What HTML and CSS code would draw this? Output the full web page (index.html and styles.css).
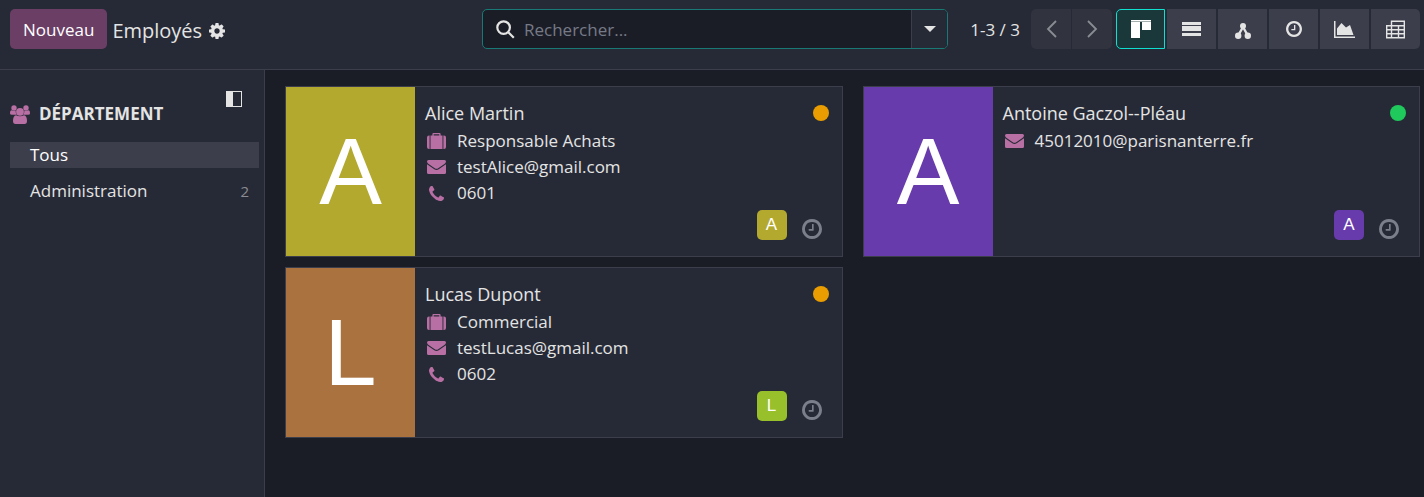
FILE: index.html
```
<!DOCTYPE html>
<html lang="fr">
<head>
<meta charset="utf-8">
<title>Employés</title>
<link rel="stylesheet" href="styles.css">
</head>
<body>
<svg class="sprite" aria-hidden="true">
  <symbol id="cog" viewBox="128 128 1536 1536"><path d="M1152 896q0-106-75-181t-181-75-181 75-75 181 75 181 181 75 181-75 75-181zm512-109v222q0 12-8 23t-20 13l-185 28q-19 54-39 91 35 50 107 138 10 12 10 25t-9 23q-27 37-99 108t-94 71q-12 0-26-9l-138-108q-44 23-91 38-16 136-29 186-7 28-36 28h-222q-14 0-24.500-8.500t-11.500-21.500l-28-184q-49-16-90-37l-141 107q-10 9-25 9-14 0-25-11-126-114-165-168-7-10-7-23 0-12 8-23 15-21 51-66.500t54-70.500q-27-50-41-99l-183-27q-13-2-21-12.500t-8-23.500v-222q0-12 8-23t19-13l186-28q14-46 39-92-40-57-107-138-10-12-10-24 0-10 9-23 26-36 98.500-107.500t94.500-71.500q13 0 26 10l138 107q44-23 91-38 16-136 29-186 7-28 36-28h222q14 0 24.500 8.500t11.500 21.500l28 184q49 16 90 37l142-107q9-9 24-9 13 0 25 10 129 119 165 170 7 8 7 22 0 12-8 23-15 21-51 66.500t-54 70.500q26 50 41 98l183 28q13 2 21 12.500t8 23.500z"/></symbol>
  <symbol id="clock" viewBox="128 128 1536 1536"><path d="M1024 544v448q0 14-9 23t-23 9h-320q-14 0-23-9t-9-23v-64q0-14 9-23t23-9h224v-352q0-14 9-23t23-9h64q14 0 23 9t9 23zm416 352q0-148-73-273t-198-198-273-73-273 73-198 198-73 273 73 273 198 198 273 73 273-73 198-198 73-273zm224 0q0 209-103 385.500t-279.500 279.500-385.500 103-385.500-103-279.500-279.500-103-385.500 103-385.500 279.500-279.500 385.500-103 385.500 103 279.500 279.500 103 385.500z"/></symbol>
  <symbol id="phone" viewBox="192 128 1408 1408"><path d="M1600 1240q0 27-10 70.500t-21 68.500q-21 50-122 106-94 51-186 51-27 0-52.500-3.500t-57.500-12.500-47.500-14.500-55.500-20.500-49-18q-98-35-175-83-128-79-264.500-215.500t-215.500-264.500q-48-77-83-175-3-9-18-49t-20.500-55.500-14.500-47.500-12.500-57.500-3.500-52.500q0-92 51-186 56-101 106-122 25-11 68.500-21t70.500-10q14 0 21 3 18 6 53 76 11 19 30 54t35 63.500 31 53.500q3 4 17.500 25t21.500 35.500 7 28.500q0 20-28.500 50t-62 55-62 53-28.500 46q0 9 5 22.500t8.500 20.500 14 24 11.500 19q76 137 174 235t235 174q2 1 19 11.500t24 14 20.500 8.500 22.500 5q18 0 46-28.500t53-62 55-62 50-28.500q14 0 28.500 7t35.500 21.500 25 17.500q25 15 53.500 31t63.500 35 54 30q70 35 76 53 3 7 3 21z"/></symbol>
  <symbol id="mail" viewBox="0 0 19 14"><path d="M1.500 0h16Q19 0 19 1.500 18.800 3 17.400 4L11.200 8.300Q9.500 9.400 7.800 8.300L1.600 4Q.2 3 0 1.500 0 0 1.500 0zM0 4.200 7.300 9.300Q9.500 10.800 11.700 9.300L19 4.200V12.500Q19 14 17.500 14h-16Q0 14 0 12.500z"/></symbol>
  <symbol id="case" viewBox="0 0 19 16"><path d="M2.600 2.500V16H2Q0 16 0 14V4.500Q0 2.500 2 2.500zM16.400 2.500H17q2 0 2 2V14q0 2-2 2h-.6zM3.500 2.500H5.400V1Q5.400 0 6.400 0h6.200q1 0 1 1v1.500h1.900V16H3.500zM6.700 1.300v1.200h5.600V1.300z"/></symbol>
  <symbol id="group" viewBox="0 0 20 19"><circle cx="4" cy="3" r="2.700"/><circle cx="16" cy="3" r="2.700"/><path d="M0 8.500Q0 5 1.800 5.200 4 6.600 5.600 5.600 5.500 8 6.800 9.700H2Q0 9.700 0 8.500zM20 8.500Q20 5 18.200 5.200 16 6.600 14.400 5.600 14.500 8 13.200 9.700H18q2 0 2-1.200z"/><circle cx="10" cy="6.800" r="3.900"/><path d="M6 10.200q4 2.300 8 0 3 .5 3 5.800 0 3-2.500 3h-9Q3 19 3 16q0-5.300 3-5.800z"/></symbol>
  <symbol id="panel" viewBox="0 0 16 16"><path d="M0 0h16v16H0zM7 1v14h8V1z" fill-rule="evenodd"/></symbol>
  <symbol id="search" viewBox="0 0 19 19"><circle cx="7.600" cy="7.600" r="6.300" fill="none" stroke="currentColor" stroke-width="2.200"/><path d="m12 12 5.800 5.800" stroke="currentColor" stroke-width="2.200"/></symbol>
  <symbol id="caret" viewBox="0 0 12 6"><path d="M0 0h12L6 6z"/></symbol>
  <symbol id="prev" viewBox="0 0 11 18"><path d="M10 1 2 9l8 8" fill="none" stroke="currentColor" stroke-width="1.800"/></symbol>
  <symbol id="next" viewBox="0 0 11 18"><path d="m1 1 8 8-8 8" fill="none" stroke="currentColor" stroke-width="1.800"/></symbol>
  <symbol id="kanban" viewBox="0 0 20 18"><path d="M0 0h20v1H0zM0 2h9v16H0zM11 2h9v8h-9z"/><path d="M0 1h20v1H0z" opacity=".6"/></symbol>
  <symbol id="list" viewBox="0 0 19 14"><path d="M0 0h19v3H0zM0 4h19v5H0zM0 11h19v3H0z"/></symbol>
  <symbol id="tree" viewBox="0 0 16 16"><circle cx="8" cy="3" r="3"/><circle cx="3.200" cy="12.800" r="3.200"/><circle cx="12.800" cy="12.800" r="3.200"/><path d="M8 4 3.200 12.500M8 4l4.800 8.500" stroke="currentColor" stroke-width="2.400"/></symbol>
  <symbol id="chart" viewBox="0 0 21 17"><path d="M0 0h1.500v15.500H21V17H0zM3 14V7.500L7.500 2l4.500 4.500L16 4l3.500 10z"/></symbol>
  <symbol id="pivot" viewBox="0 0 19 18"><path d="M5.500 5V.7h12.800v16.600H.7V5.300h17.600M.7 9.300h17.600M.7 13.300h17.600M5.500 5v12M12.500 5v12" fill="none" stroke="currentColor" stroke-width="1.400"/></symbol>
</svg>

<header class="control-panel">
  <div class="breadcrumb">
    <button class="btn-new" type="button">Nouveau</button>
    <h1 class="title">Employés</h1>
    <button class="icon-btn" type="button" aria-label="Actions"><svg class="ico-16"><use href="#cog"/></svg></button>
  </div>
  <div class="search">
    <label class="search-label" for="q" aria-label="Rechercher"><svg class="ico-19"><use href="#search"/></svg></label>
    <input class="search-input" id="q" type="text" placeholder="Rechercher...">
    <button class="search-toggle" type="button" aria-label="Filtres"><svg class="ico-caret"><use href="#caret"/></svg></button>
  </div>
  <div class="tools">
    <span class="pager">1-3 / 3</span>
    <div class="pager-nav">
      <button class="pager-btn" type="button" disabled aria-label="Précédent"><svg class="ico-arrow"><use href="#prev"/></svg></button>
      <button class="pager-btn" type="button" disabled aria-label="Suivant"><svg class="ico-arrow"><use href="#next"/></svg></button>
    </div>
    <nav class="views">
      <button class="view-btn active" type="button" aria-label="Kanban"><svg class="ico-view"><use href="#kanban"/></svg></button>
      <button class="view-btn" type="button" aria-label="Liste"><svg class="ico-list"><use href="#list"/></svg></button>
      <button class="view-btn" type="button" aria-label="Hiérarchie"><svg class="ico-tree"><use href="#tree"/></svg></button>
      <button class="view-btn" type="button" aria-label="Activité"><svg class="ico-16"><use href="#clock"/></svg></button>
      <button class="view-btn" type="button" aria-label="Graphique"><svg class="ico-chart"><use href="#chart"/></svg></button>
      <button class="view-btn" type="button" aria-label="Tableau croisé"><svg class="ico-19"><use href="#pivot"/></svg></button>
    </nav>
  </div>
</header>

<div class="content">
  <aside class="sidebar">
    <button class="icon-btn collapse" type="button" aria-label="Réduire"><svg class="ico-16"><use href="#panel"/></svg></button>
    <h2 class="section"><svg class="ico-group"><use href="#group"/></svg>Département</h2>
    <ul class="filters">
      <li><button class="filter selected" type="button">Tous</button></li>
      <li><button class="filter" type="button">Administration<span class="count">2</span></button></li>
    </ul>
  </aside>

  <main class="cards">
    <article class="card">
      <div class="photo olive">A</div>
      <div class="info">
        <div class="head"><h3 class="name">Alice Martin</h3><span class="status away"></span></div>
        <ul class="details">
          <li class="detail"><span class="mark"><svg class="ico-case"><use href="#case"/></svg></span>Responsable Achats</li>
          <li class="detail"><span class="mark"><svg class="ico-mail"><use href="#mail"/></svg></span>testAlice@gmail.com</li>
          <li class="detail"><span class="mark"><svg class="ico-phone"><use href="#phone"/></svg></span>0601</li>
        </ul>
        <div class="foot"><span class="avatar olive">A</span><button class="icon-btn activity" type="button" aria-label="Activités"><svg class="ico-20"><use href="#clock"/></svg></button></div>
      </div>
    </article>
    <article class="card">
      <div class="photo violet">A</div>
      <div class="info">
        <div class="head"><h3 class="name">Antoine Gaczol--Pléau</h3><span class="status online"></span></div>
        <ul class="details">
          <li class="detail"><span class="mark"><svg class="ico-mail"><use href="#mail"/></svg></span>45012010@parisnanterre.fr</li>
        </ul>
        <div class="foot"><span class="avatar violet">A</span><button class="icon-btn activity" type="button" aria-label="Activités"><svg class="ico-20"><use href="#clock"/></svg></button></div>
      </div>
    </article>
    <article class="card">
      <div class="photo brown">L</div>
      <div class="info">
        <div class="head"><h3 class="name">Lucas Dupont</h3><span class="status away"></span></div>
        <ul class="details">
          <li class="detail"><span class="mark"><svg class="ico-case"><use href="#case"/></svg></span>Commercial</li>
          <li class="detail"><span class="mark"><svg class="ico-mail"><use href="#mail"/></svg></span>testLucas@gmail.com</li>
          <li class="detail"><span class="mark"><svg class="ico-phone"><use href="#phone"/></svg></span>0602</li>
        </ul>
        <div class="foot"><span class="avatar lime">L</span><button class="icon-btn activity" type="button" aria-label="Activités"><svg class="ico-20"><use href="#clock"/></svg></button></div>
      </div>
    </article>
  </main>
</div>
</body>
</html>
```
FILE: styles.css
```
* { box-sizing: border-box; }
body {
  margin: 0;
  min-height: 100vh;
  display: flex;
  flex-direction: column;
  background: #1b1d26;
  color: #e4e4e4;
  font: 17px/26px "Segoe UI", "Open Sans", "Noto Sans", sans-serif;
}
h1, h2, h3, ul { margin: 0; padding: 0; font-weight: 400; list-style: none; }
button, input { font: inherit; color: inherit; border: 0; padding: 0; margin: 0; background: none; }
svg { display: block; fill: currentColor; }
.sprite { position: absolute; width: 0; height: 0; }

.ico-16 { width: 16px; height: 16px; }
.ico-tree { width: 16px; height: 16px; margin-top: 4px; }
.ico-19 { width: 19px; height: 19px; }
.ico-20 { width: 20px; height: 20px; }
.ico-caret { width: 12px; height: 6px; }
.ico-arrow { width: 11px; height: 18px; }
.ico-view { width: 20px; height: 18px; }
.ico-list { width: 19px; height: 14px; }
.ico-chart { width: 21px; height: 17px; }
.ico-group { width: 20px; height: 19px; color: #b86fa4; }
.ico-case { width: 19px; height: 16px; }
.ico-mail { width: 19px; height: 14px; }
.ico-phone { width: 15px; height: 15px; }

.control-panel {
  display: grid;
  grid-template-columns: 1fr minmax(0, 466px) 1fr;
  align-items: center;
  padding: 9px 4px 20px 10px;
  background: #262a36;
  border-bottom: 1px solid #3c3e4b;
}
.breadcrumb { display: flex; align-items: center; gap: 5px; }
.btn-new { height: 40px; padding: 2px 13px 0; border-radius: 5px; background: #6b3e66; color: #fff; }
.title { padding-top: 3px; font-size: 20px; }
.icon-btn { display: flex; cursor: pointer; }
.breadcrumb .icon-btn { padding: 3px 0 0 2px; }

.search { display: flex; height: 40px; border: 1px solid #197a75; border-radius: 5px; background: #1b1d26; overflow: hidden; }
.search-label { display: flex; align-items: center; padding: 0 9px 0 13px; }
.search-input { flex: 1; min-width: 0; padding-top: 2px; outline: 0; }
.search-input::placeholder { color: #767a87; opacity: 1; }
.search-toggle { display: flex; align-items: center; justify-content: center; width: 36px; background: #262a36; border-left: 1px solid #3c3e4b; }

.tools { display: flex; align-items: center; justify-content: flex-end; }
.pager { margin-right: 11px; padding-top: 2px; white-space: nowrap; }
.pager-nav { display: flex; gap: 1px; margin-right: 4px; border-radius: 5px; overflow: hidden; }
.pager-btn { display: flex; align-items: center; justify-content: center; width: 40px; height: 40px; background: #31333f; color: #8b8c93; }
.views { display: flex; gap: 2px; }
.view-btn { display: flex; align-items: center; justify-content: center; width: 49px; height: 40px; background: #3c3e4b; }
.view-btn:first-child { border-radius: 5px 0 0 5px; }
.view-btn:last-child { border-radius: 0 5px 5px 0; }
.view-btn.active { background: #1a3739; border: 1px solid #10e0cf; color: #fff; }

.content { flex: 1; display: flex; }
.sidebar { width: 265px; flex: none; padding: 21px 5px 0 10px; background: #262a36; border-right: 1px solid #3c3e4b; }
.collapse { margin: 0 17px 0 auto; }
.section { display: flex; align-items: center; gap: 9px; margin: -6px 0 15px; font-size: 17px; font-weight: 700; text-transform: uppercase; }
.filters { display: flex; flex-direction: column; gap: 10px; }
.filter { display: flex; width: 100%; padding: 0 10px 0 20px; text-align: left; }
.filter.selected { background: #3c3e4b; color: #fff; }
.count { margin-left: auto; font-size: 15px; color: #8b8c93; }

.cards {
  flex: 1;
  min-width: 0;
  display: grid;
  grid-template-columns: repeat(auto-fill, minmax(400px, 1fr));
  align-content: start;
  gap: 10px 20px;
  padding: 16px 4px 16px 20px;
}
.card { display: flex; min-height: 171px; background: #262a36; border: 1px solid #3c3e4b; }
.photo { display: flex; align-items: center; justify-content: center; width: 129px; flex: none; color: #fff; font: 94px/1 "Liberation Sans", Arial, sans-serif; }
.info { flex: 1; min-width: 0; display: flex; flex-direction: column; padding: 13px 13px 16px 10px; }
.head { display: flex; align-items: center; justify-content: space-between; margin-bottom: 2px; }
.name { font-size: 18px; }
.status { width: 16px; height: 16px; border-radius: 50%; }
.detail { display: flex; align-items: center; gap: 9px; }
.mark { display: flex; justify-content: center; width: 23px; color: #b86fa4; }
.foot { display: flex; justify-content: flex-end; align-items: flex-end; gap: 15px; margin-top: auto; padding-right: 7px; }
.avatar { width: 30px; height: 30px; border-radius: 5px; color: #fff; font: 17px/30px "Liberation Sans", Arial, sans-serif; text-align: center; }
.activity { padding-bottom: 1px; color: #7b7f8c; }

.olive { background: #b3a92f; }
.violet { background: #673bab; }
.brown { background: #a9723f; }
.lime { background: #98c02a; }
.away { background: #e99d00; }
.online { background: #1fc95b; }
```
